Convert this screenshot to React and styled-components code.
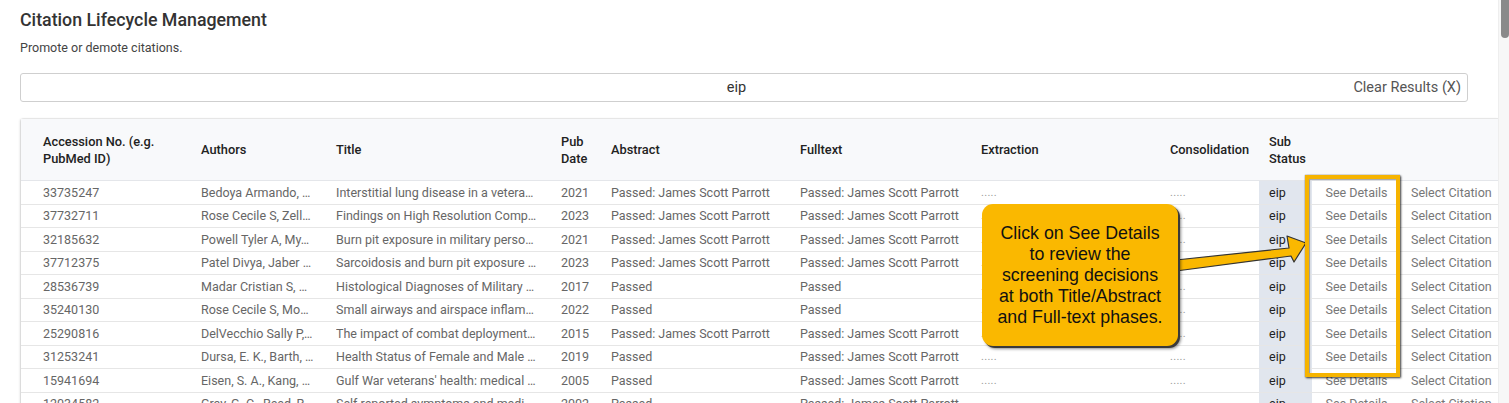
import React from "react";
import styled, { createGlobalStyle } from "styled-components";

const Global = createGlobalStyle`
  html, body { margin: 0; padding: 0; background: #fff; }
  body { font-family: Roboto, "Noto Sans", Arial, sans-serif; overflow: hidden; }
  * { box-sizing: border-box; }
`;

const COLS = "180px 135px 225px 50px 189px 181px 189px 89px 53px 89px 97px";

const Shell = styled.div`
  display: flex;
  height: 100vh;
  width: 100vw;
  overflow: hidden;
`;

const Main = styled.main`
  position: relative;
  flex: 1;
  min-width: 0;
  padding: 10px 0 0 20px;
  overflow: hidden;
`;

const ScrollTrack = styled.div`
  width: 11px;
  flex: none;
  background: #f7f7f7;
  border-left: 1px solid #eeeeee;
  display: flex;
  justify-content: flex-end;
`;

const ScrollThumb = styled.div`
  width: 8px;
  height: 38px;
  background: #8a8a8a;
  border-radius: 0 0 4px 4px;
`;

const Title = styled.h1`
  margin: 0;
  font-size: 17.8px;
  line-height: 20px;
  font-weight: 500;
  color: #333;
`;

const Subtitle = styled.p`
  margin: 10px 0 0;
  font-size: 12.5px;
  line-height: 16px;
  color: #444;
`;

const SearchBar = styled.div`
  margin: 17px 30px 0 0;
  height: 29px;
  border: 1px solid #cfcfcf;
  border-radius: 3px;
  display: grid;
  grid-template-columns: 1fr auto 1fr;
  align-items: center;
  padding-right: 15px;
  font-size: 14.5px;
`;

const SearchValue = styled.span`
  color: #333;
  grid-column: 2;
`;

const ClearButton = styled.span`
  grid-column: 3;
  justify-self: end;
  margin-right: -9px;
  color: #555;
`;

const TableWrap = styled.div`
  margin-top: 16px;
  border-left: 1px solid #dcdcdc;
  border-top: 1px solid #e6e6e6;
  border-top-left-radius: 4px;
  box-shadow: -1px 0 2px rgba(0, 0, 0, 0.06);
`;

const HeadRow = styled.div`
  display: grid;
  grid-template-columns: ${COLS};
  height: 62px;
  background: #f8f9fb;
  border-bottom: 1px solid #e4e6ea;
  align-items: center;
`;

const HeadCell = styled.div`
  font-size: 12.8px;
  line-height: 17px;
  font-weight: 500;
  color: #222;
  white-space: nowrap;
  padding-left: ${(p) => p.$pl || 0}px;
`;

const Row = styled.div`
  display: grid;
  grid-template-columns: ${COLS};
  height: 23.5px;
  border-bottom: 1px solid #e6e6e6;
`;

const Cell = styled.div`
  display: flex;
  align-items: center;
  justify-content: ${(p) => (p.$center ? "center" : "flex-start")};
  min-width: 0;
  overflow: hidden;
  padding-left: ${(p) => p.$pl || 0}px;
  padding-right: ${(p) => p.$pr || 0}px;
  font-size: 12.5px;
  color: ${(p) => p.$color || "#666"};
  background: ${(p) => p.$bg || "transparent"};
  white-space: nowrap;
`;

const Clip = styled.span`
  overflow: hidden;
  text-overflow: ellipsis;
  white-space: nowrap;
  min-width: 0;
`;

const Dots = styled.span`
  color: #9a9a9a;
  font-size: 11px;
  letter-spacing: 0.3px;
`;

const Callout = styled.div`
  position: absolute;
  left: 982px;
  top: 204px;
  width: 196px;
  height: 142px;
  background: #fab800;
  border-radius: 11px;
  box-shadow: 2px 2px 0 #3a3a3a, 3px 3px 3px rgba(0, 0, 0, 0.45);
  display: flex;
  align-items: center;
  justify-content: center;
  text-align: center;
  font-family: "Liberation Sans", Arial, sans-serif;
  font-size: 17.8px;
  line-height: 21px;
  color: #111;
  white-space: nowrap;
`;

const Highlight = styled.div`
  position: absolute;
  left: 1305px;
  top: 175px;
  width: 95px;
  height: 202px;
  border: 4px solid #f6b400;
  box-shadow: 1px 1px 2px rgba(0, 0, 0, 0.75), 0 0 1px rgba(0, 0, 0, 0.5),
    inset 1px 1px 1px rgba(0, 0, 0, 0.35);
  pointer-events: none;
`;

const ArrowSvg = styled.svg`
  position: absolute;
  left: 0;
  top: 0;
  overflow: visible;
  pointer-events: none;
`;

const rows = [
  ["33735247", "Bedoya Armando, …", "Interstitial lung disease in a vetera…", "2021", "Passed: James Scott Parrott", "Passed: James Scott Parrott"],
  ["37732711", "Rose Cecile S, Zell…", "Findings on High Resolution Comp…", "2023", "Passed: James Scott Parrott", "Passed: James Scott Parrott"],
  ["32185632", "Powell Tyler A, My…", "Burn pit exposure in military perso…", "2021", "Passed: James Scott Parrott", "Passed: James Scott Parrott"],
  ["37712375", "Patel Divya, Jaber …", "Sarcoidosis and burn pit exposure …", "2023", "Passed: James Scott Parrott", "Passed: James Scott Parrott"],
  ["28536739", "Madar Cristian S, …", "Histological Diagnoses of Military …", "2017", "Passed", "Passed"],
  ["35240130", "Rose Cecile S, Mo…", "Small airways and airspace inflam…", "2022", "Passed", "Passed"],
  ["25290816", "DelVecchio Sally P,…", "The impact of combat deployment…", "2015", "Passed: James Scott Parrott", "Passed: James Scott Parrott"],
  ["31253241", "Dursa, E. K., Barth, …", "Health Status of Female and Male …", "2019", "Passed", "Passed: James Scott Parrott"],
  ["15941694", "Eisen, S. A., Kang, …", "Gulf War veterans' health: medical …", "2005", "Passed", "Passed: James Scott Parrott"],
  ["12034582", "Gray, G. C., Reed, R…", "Self reported symptoms and medi…", "2002", "Passed", "Passed: James Scott Parrott"],
];

export default function App() {
  return (
    <>
      <Global />
      <Shell>
        <Main>
          <Title>Citation Lifecycle Management</Title>
          <Subtitle>Promote or demote citations.</Subtitle>
          <SearchBar>
            <SearchValue>eip</SearchValue>
            <ClearButton>Clear Results (X)</ClearButton>
          </SearchBar>
          <TableWrap>
            <HeadRow>
              <HeadCell $pl={22}>
                Accession No. (e.g.
                <br />
                PubMed ID)
              </HeadCell>
              <HeadCell>Authors</HeadCell>
              <HeadCell>Title</HeadCell>
              <HeadCell>
                Pub
                <br />
                Date
              </HeadCell>
              <HeadCell>Abstract</HeadCell>
              <HeadCell>Fulltext</HeadCell>
              <HeadCell>Extraction</HeadCell>
              <HeadCell>Consolidation</HeadCell>
              <HeadCell $pl={10}>
                Sub
                <br />
                Status
              </HeadCell>
              <HeadCell />
              <HeadCell />
            </HeadRow>
            {rows.map((r) => (
              <Row key={r[0]}>
                <Cell $pl={22}>{r[0]}</Cell>
                <Cell $pr={4}>
                  <Clip>{r[1]}</Clip>
                </Cell>
                <Cell $pr={4}>
                  <Clip>{r[2]}</Clip>
                </Cell>
                <Cell>{r[3]}</Cell>
                <Cell>{r[4]}</Cell>
                <Cell>{r[5]}</Cell>
                <Cell>
                  <Dots>.....</Dots>
                </Cell>
                <Cell>
                  <Dots>.....</Dots>
                </Cell>
                <Cell $pl={10} $bg="#e1e6ee" $color="#222">
                  eip
                </Cell>
                <Cell $center $color="#777">
                  See Details
                </Cell>
                <Cell $pl={10} $color="#777">
                  Select Citation
                </Cell>
              </Row>
            ))}
          </TableWrap>

          <ArrowSvg width="1" height="1">
            <polygon
              points="1176,260 1289,248 1287,236 1306,243 1294,262 1291,256 1176,271"
              fill="#fab800"
              stroke="#333"
              strokeWidth="1.2"
              strokeLinejoin="round"
            />
          </ArrowSvg>
          <Callout>
            <div>
              Click on See Details
              <br />
              to review the
              <br />
              screening decisions
              <br />
              at both Title/Abstract
              <br />
              and Full-text phases.
            </div>
          </Callout>
          <Highlight />
        </Main>
        <ScrollTrack>
          <ScrollThumb />
        </ScrollTrack>
      </Shell>
    </>
  );
}
